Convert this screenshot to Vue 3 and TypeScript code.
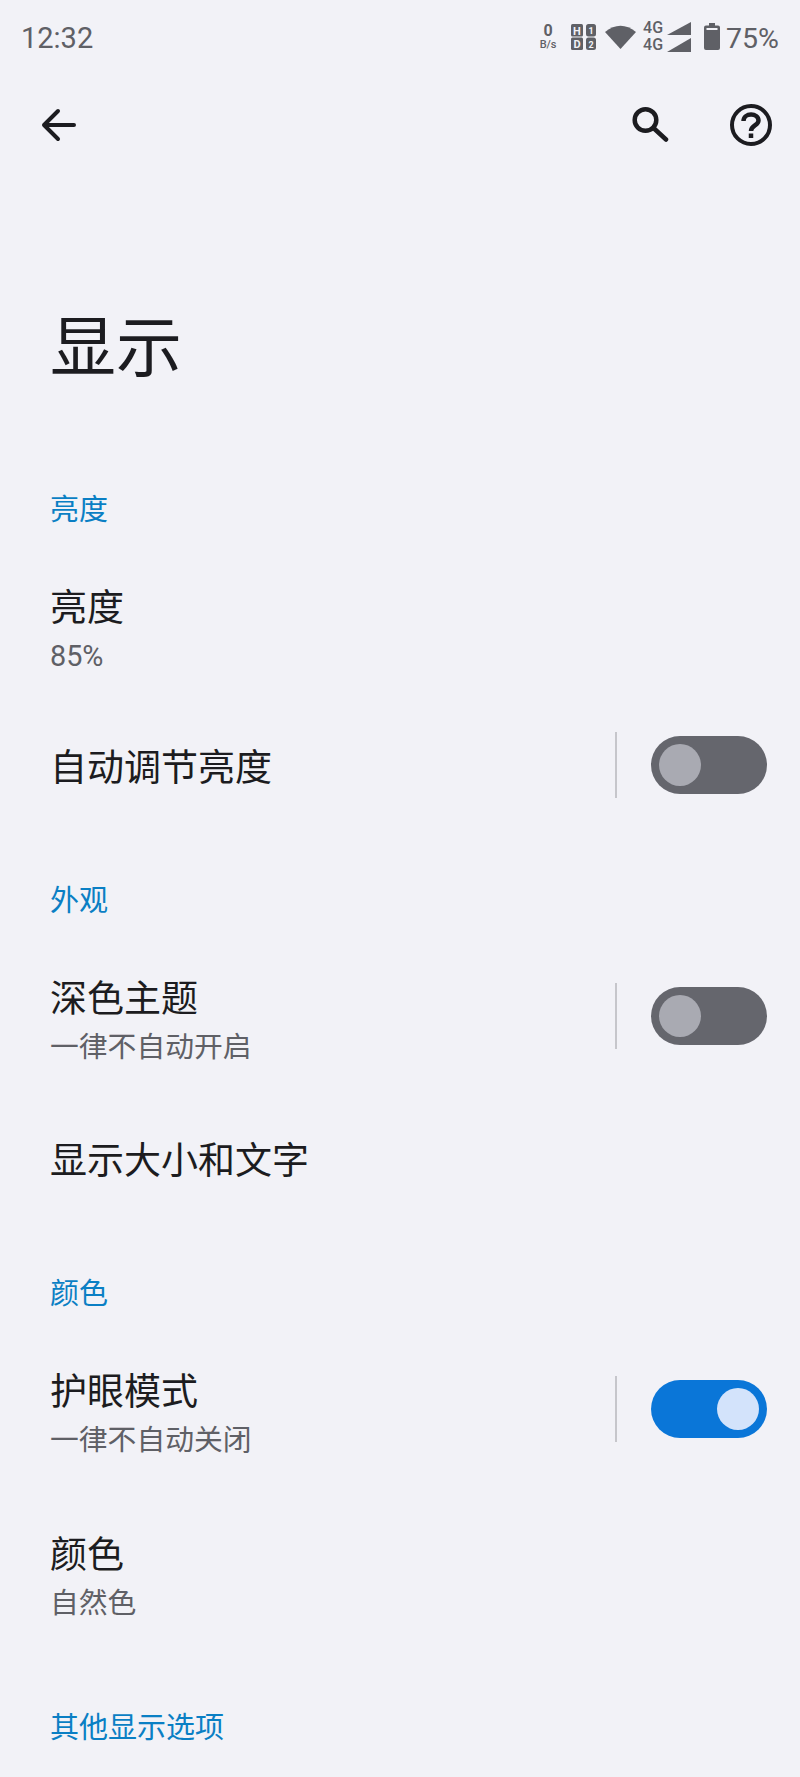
<template>
  <div class="page">
    <div class="status-bar">
      <span class="clock">12:32</span>
      <div class="status-icons">
        <div class="net-speed"><b>0</b><span>B/s</span></div>
        <svg class="hd" width="25" height="26" viewBox="0 0 25 26">
          <rect x="0" y="0" width="12" height="12.500" rx="1.500" fill="#5f6066" />
          <rect x="0" y="13.500" width="12" height="12.500" rx="1.500" fill="#5f6066" />
          <rect x="15" y="0" width="10" height="12.500" rx="2.500" fill="#5f6066" />
          <rect x="15" y="13.500" width="10" height="12.500" rx="2.500" fill="#5f6066" />
          <text x="6" y="10.500" class="hd-t">H</text>
          <text x="6" y="24" class="hd-t">D</text>
          <text x="20" y="10" class="hd-s">1</text>
          <text x="20" y="23.500" class="hd-s">2</text>
        </svg>
        <svg class="wifi" width="31" height="25" viewBox="0 0 31 25">
          <path d="M0 8 Q15.500 -4.500 31 8 L15.500 25 Z" fill="#5f6066" />
        </svg>
        <div class="sim">
          <div class="sim-row">
            <span>4G</span>
            <svg width="24" height="13" viewBox="0 0 24 13"><path d="M0 13 L24 0 V13 Z" fill="#5f6066" /></svg>
          </div>
          <div class="sim-row">
            <span>4G</span>
            <svg width="24" height="14" viewBox="0 0 24 14"><path d="M0 14 L24 0 V14 Z" fill="#5f6066" /></svg>
          </div>
        </div>
        <svg class="battery" width="16" height="27" viewBox="0 0 16 27">
          <path d="M5 0 H11 V2.500 H14 Q16 2.500 16 4.500 V25 Q16 27 14 27 H2 Q0 27 0 25 V4.500 Q0 2.500 2 2.500 H5 Z" fill="#5f6066" />
          <rect x="2.500" y="5" width="11" height="2" fill="#f2f2f7" />
        </svg>
        <span class="percent">75%</span>
      </div>
    </div>

    <div class="toolbar">
      <svg width="38" height="36" viewBox="0 0 38 36" fill="none" stroke="#1c1c20" stroke-width="4" stroke-linecap="round" stroke-linejoin="round">
        <path d="M35 18 H5 M19 4 L5 18 L19 32" />
      </svg>
      <div class="toolbar-right">
        <svg width="38" height="38" viewBox="0 0 38 38" fill="none" stroke="#1c1c20" stroke-width="4.500" stroke-linecap="round">
          <circle cx="14.500" cy="14" r="10.800" />
          <path d="M22.500 22 L35 33.500" />
        </svg>
        <svg width="44" height="44" viewBox="0 0 44 44" fill="none" stroke="#1c1c20" stroke-width="4">
          <circle cx="22" cy="22" r="19" />
          <path d="M14.500 18 C14.500 9.500 29.500 9.500 29.500 17.500 C29.500 22.500 22 22.500 22 28" stroke-width="4.500" />
          <path d="M22 30.500 V35" stroke-width="4.500" />
        </svg>
      </div>
    </div>

    <h1 class="title">显示</h1>

    <section v-for="group in groups" :key="group.name" class="group">
      <h2 class="group-name">{{ group.name }}</h2>
      <div
        v-for="item in group.items"
        :key="item.title"
        class="row"
        :class="{ two: item.summary, plain: !item.summary && !item.toggle }"
      >
        <div class="row-text">
          <div class="row-title">{{ item.title }}</div>
          <div v-if="item.summary" class="row-summary">{{ item.summary }}</div>
        </div>
        <div v-if="item.toggle" class="row-end">
          <div class="divider"></div>
          <div class="switch" :class="item.toggle"><div class="knob"></div></div>
        </div>
      </div>
    </section>
  </div>
</template>

<script setup lang="ts">
interface Item {
  title: string
  summary?: string
  toggle?: 'on' | 'off'
}

interface Group {
  name: string
  items: Item[]
}

const groups: Group[] = [
  {
    name: '亮度',
    items: [
      { title: '亮度', summary: '85%' },
      { title: '自动调节亮度', toggle: 'off' }
    ]
  },
  {
    name: '外观',
    items: [
      { title: '深色主题', summary: '一律不自动开启', toggle: 'off' },
      { title: '显示大小和文字' }
    ]
  },
  {
    name: '颜色',
    items: [
      { title: '护眼模式', summary: '一律不自动关闭', toggle: 'on' },
      { title: '颜色', summary: '自然色' }
    ]
  },
  { name: '其他显示选项', items: [] }
]
</script>

<style>
html,
body {
  margin: 0;
  background: #f2f2f7;
}
</style>

<style scoped>
.page {
  width: 800px;
  height: 1777px;
  overflow: hidden;
  background: #f2f2f7;
  font-family: Roboto, "Noto Sans CJK SC", sans-serif;
  color: #1c1c20;
}

.status-bar {
  height: 76px;
  display: flex;
  align-items: center;
  justify-content: space-between;
  padding: 0 21px 0 21px;
  color: #5f6066;
}

.clock {
  font-size: 29px;
}

.status-icons {
  display: flex;
  align-items: center;
}

.net-speed {
  width: 20px;
  margin-right: 13px;
  margin-top: -3px;
  display: flex;
  flex-direction: column;
  align-items: center;
  font-size: 11px;
  line-height: 12px;
  font-weight: 500;
}

.net-speed b {
  font-size: 16px;
  line-height: 17px;
  font-weight: 700;
}

.hd {
  margin-right: 9px;
  margin-top: -3px;
}

.hd-t,
.hd-s {
  fill: #f2f2f7;
  text-anchor: middle;
  font-weight: 700;
}

.hd-t {
  font-size: 11px;
}

.hd-s {
  font-size: 9px;
}

.wifi {
  margin-top: -3px;
}

.sim {
  margin-left: 7px;
  margin-right: 13px;
  margin-top: -3px;
  display: flex;
  flex-direction: column;
  gap: 3px;
}

.sim-row {
  display: flex;
  align-items: flex-end;
  height: 14px;
  font-size: 16px;
  line-height: 14px;
  font-weight: 500;
}

.sim-row span {
  width: 24px;
}

.battery {
  margin-top: -3px;
}

.percent {
  margin-left: 6px;
  font-size: 28.500px;
}

.toolbar {
  height: 98px;
  display: flex;
  align-items: center;
  justify-content: space-between;
  padding: 0 27px 0 39px;
}

.toolbar-right {
  display: flex;
  align-items: center;
  gap: 60px;
}

.title {
  margin: 0;
  padding: 133px 0 43px 50px;
  font-size: 66px;
  line-height: 84px;
  font-weight: 400;
}

.group-name {
  margin: 0;
  padding: 46px 50px 10px;
  font-size: 29px;
  line-height: 60px;
  font-weight: 400;
  color: #0a7fc4;
}

.group:last-child .group-name {
  padding-top: 38px;
}

.row {
  display: flex;
  align-items: center;
  height: 112px;
  padding: 0 33px 0 50px;
}

.row.two {
  height: 163px;
}

.row.plain {
  height: 114px;
}

.row.two .row-text {
  margin-bottom: 4px;
}

.row.plain .row-text {
  padding-top: 2px;
}

.row-text {
  flex: 1;
}

.row-title {
  font-size: 37px;
  line-height: 52px;
}

.row-summary {
  font-size: 28.800px;
  line-height: 42px;
  color: #5f6066;
}

.row-end {
  display: flex;
  align-items: center;
  gap: 34px;
  margin-bottom: 9px;
}

.row.two .row-end {
  margin-bottom: 13px;
}

.divider {
  width: 2px;
  height: 66px;
  background: #c6c6cb;
}

.switch {
  position: relative;
  width: 116px;
  height: 58px;
  border-radius: 29px;
  background: #65666d;
}

.switch .knob {
  position: absolute;
  top: 8px;
  left: 8px;
  width: 42px;
  height: 42px;
  border-radius: 50%;
  background: #a9aab2;
}

.switch.on {
  background: #0a76d8;
}

.switch.on .knob {
  left: auto;
  right: 8px;
  background: #d3e3fb;
}
</style>
